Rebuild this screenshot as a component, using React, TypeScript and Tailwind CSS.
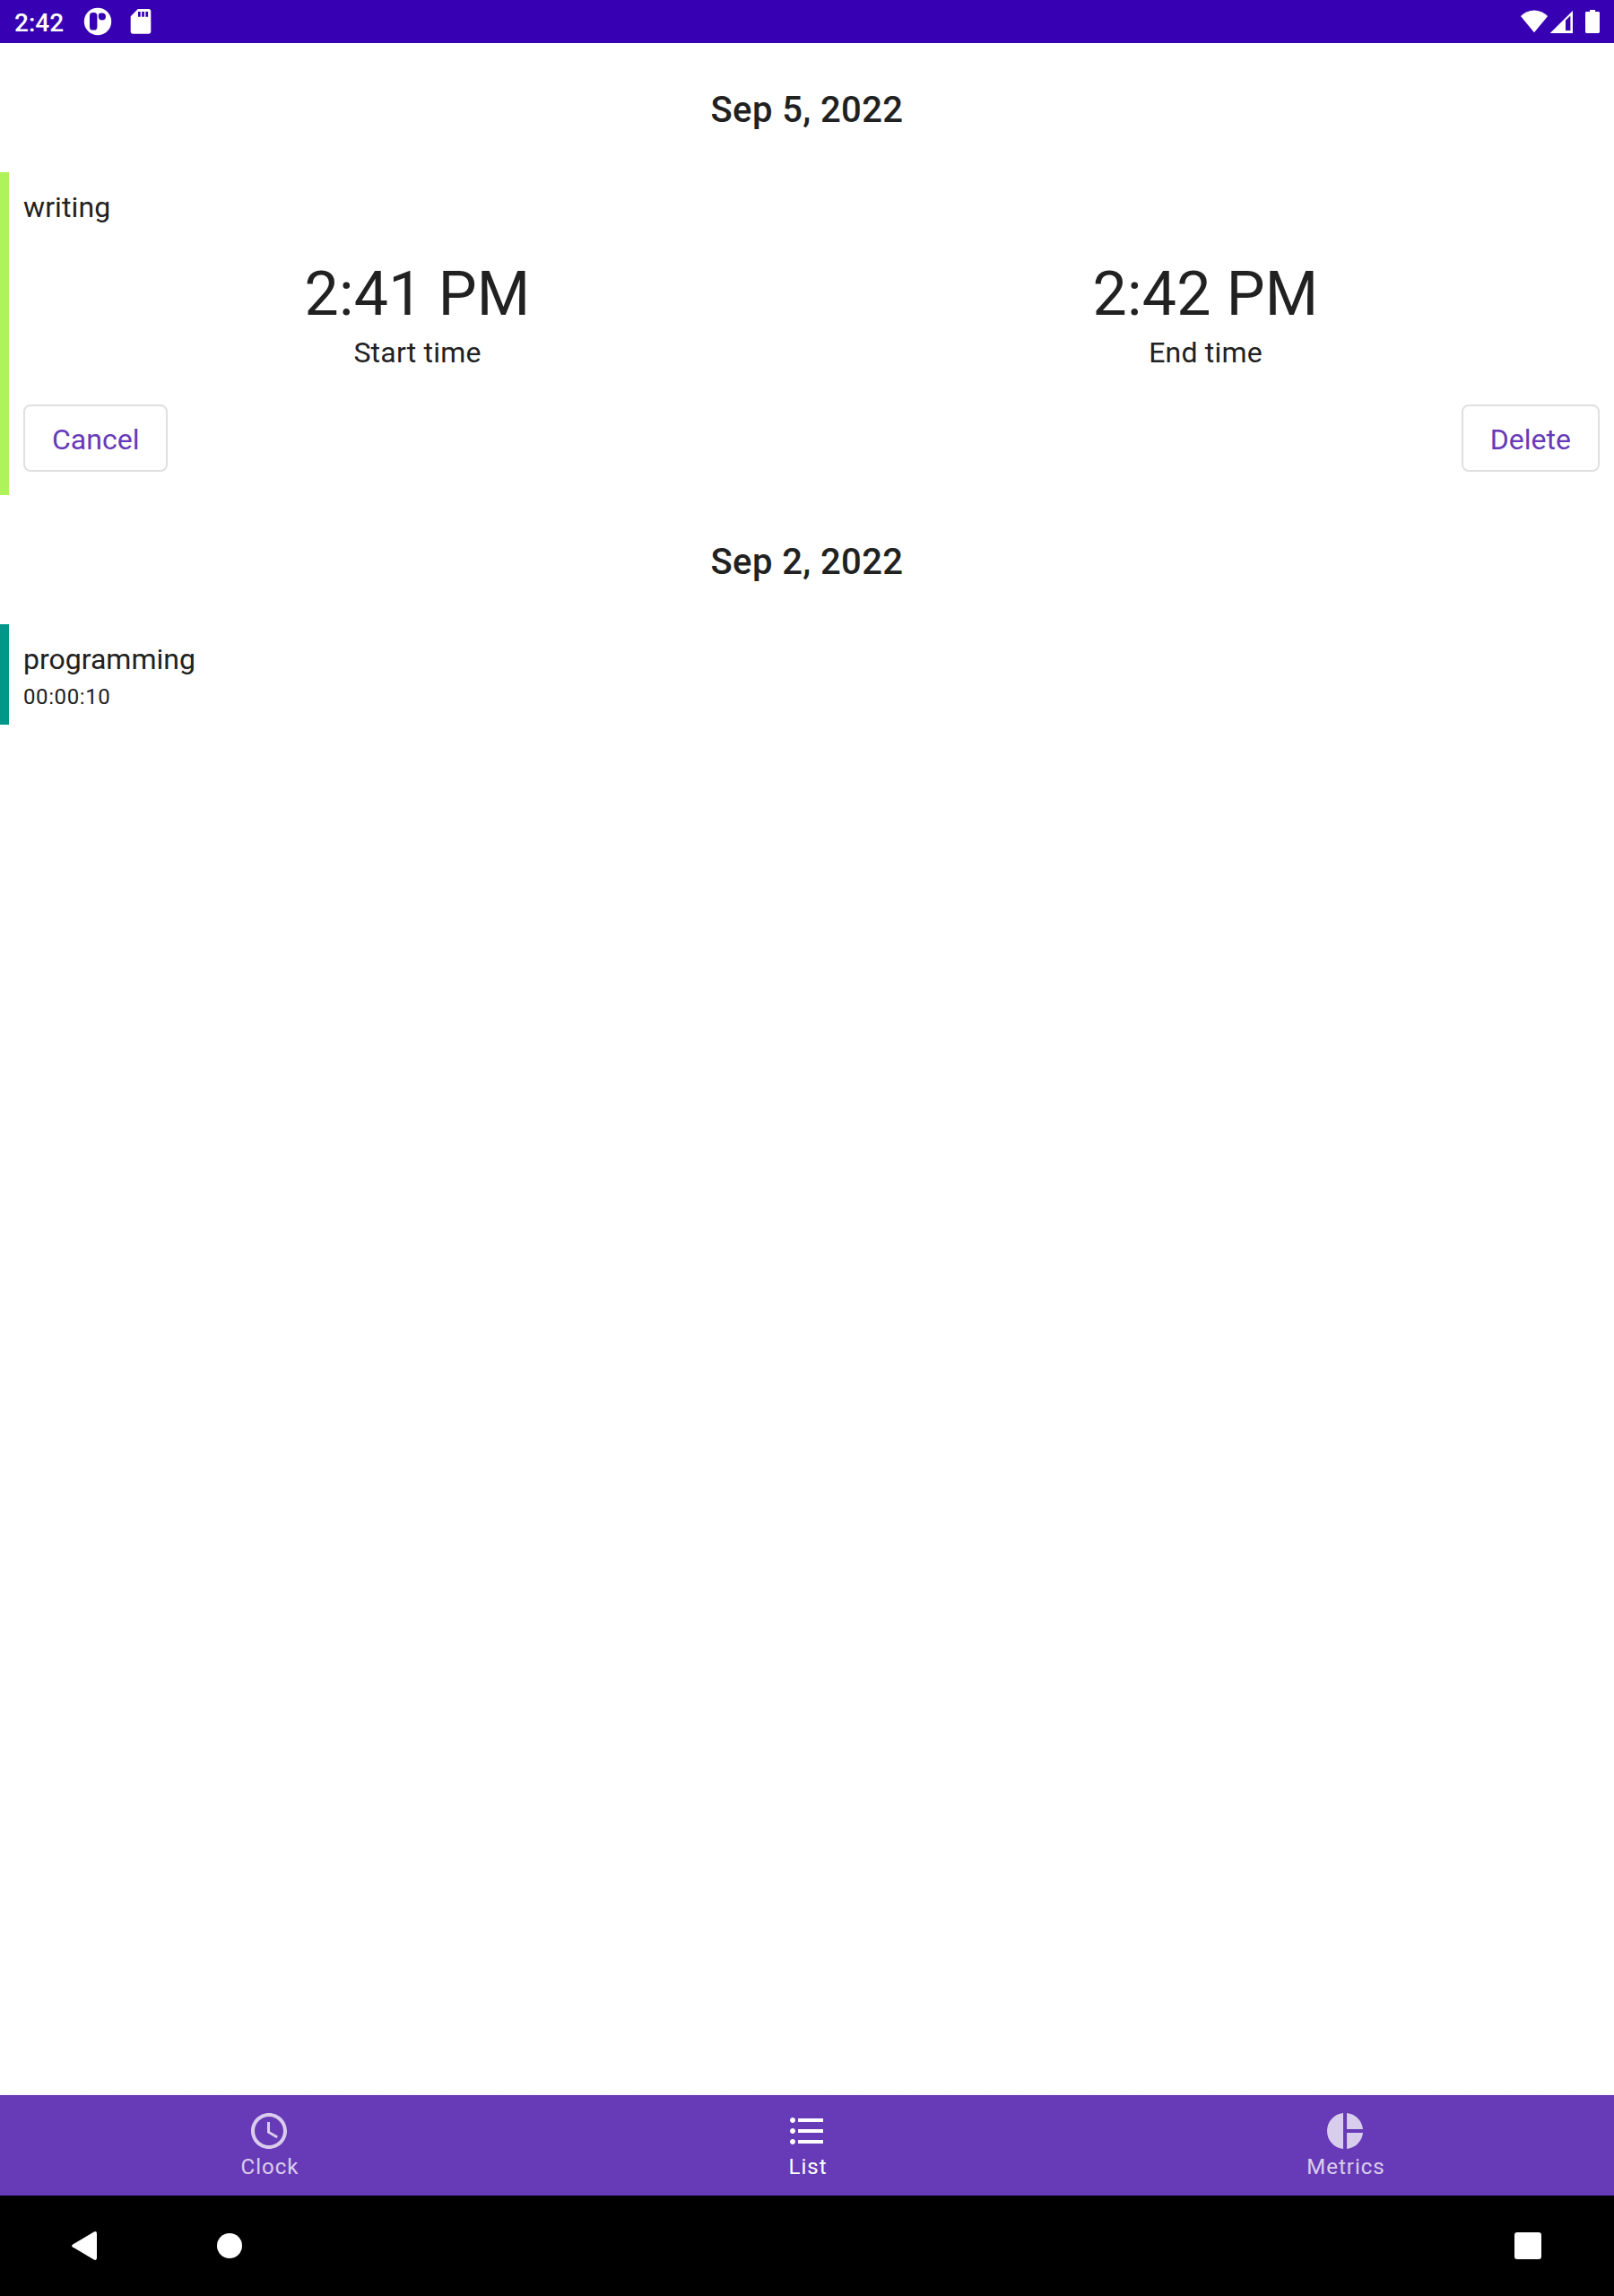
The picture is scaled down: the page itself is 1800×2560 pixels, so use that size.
import React from "react";

const font = "font-['Roboto',sans-serif]";

function DateHeader({ children }: { children: React.ReactNode }) {
  return (
    <h2 className="flex h-[144px] items-center justify-center pt-[6px] text-[40px] font-medium tracking-[0.4px]">
      {children}
    </h2>
  );
}

function Time({ value, label }: { value: string; label: string }) {
  return (
    <div className="flex flex-1 flex-col items-center">
      <div className="h-[80px] text-[68px] leading-[80px] tracking-[0.25px]">{value}</div>
      <div className="mt-[3px] h-[44px] text-[32px] leading-[44px] tracking-[0.2px]">{label}</div>
    </div>
  );
}

function OutlineButton({ children }: { children: string }) {
  return (
    <button className="h-[75px] rounded-[8px] border-2 border-[#e0e0e0] px-[30px] pt-[2px] text-[32px] text-[#673ab7]">
      {children}
    </button>
  );
}

function NavItem({ label, active, path }: { label: string; active?: boolean; path: string }) {
  return (
    <div className={`flex flex-1 flex-col items-center pt-[16px] text-white ${active ? "" : "opacity-75"}`}>
      <svg className="h-[48px] w-[48px]" viewBox="0 0 24 24" fill="currentColor">
        <path d={path} />
      </svg>
      <span className="mt-[1px] pl-[2px] text-[24px] leading-[30px] tracking-[1px]">{label}</span>
    </div>
  );
}

function NotificationIcons() {
  return (
    <svg className="ml-auto h-[48px] w-[80px]" viewBox="92 0 80 48">
      <circle cx="109" cy="24" r="15.2" fill="#fff" />
      <rect x="100" y="14" width="8.4" height="19.500" rx="3.600" fill="#3700b3" />
      <path d="M112 14.400H113.900a4.050 4.050 0 1 1-4.050 4.050V16.500Q110 14.600 112 14.400z" fill="#3700b3" />
      <path
        d="M153.800 10H165.500a2.800 2.800 0 0 1 2.800 2.800V35a2.800 2.800 0 0 1-2.800 2.800H148.500a2.800 2.800 0 0 1-2.800-2.800V18.200z"
        fill="#fff"
      />
      <path d="M154 13h2.700v5.700H154zM158.200 13h2.700v5.700h-2.700zM162.400 13h2.700v5.700h-2.700z" fill="#3700b3" />
    </svg>
  );
}

function SystemIcons() {
  return (
    <svg className="h-[48px] w-[92px]" viewBox="1694 0 92 48" fill="#fff">
      <path d="M1711 36.300L1695.900 18C1704.500 9.200 1717.500 9.200 1726.100 18z" />
      <path fillRule="evenodd" d="M1754 12v25h-25.300zM1751.400 17.500L1746 22.800V34h5.400z" />
      <path d="M1773 11h6v2h3.600a1.400 1.400 0 0 1 1.400 1.400V35.600a1.400 1.400 0 0 1-1.400 1.400h-13.200a1.400 1.400 0 0 1-1.400-1.400V14.400a1.400 1.400 0 0 1 1.400-1.400h3.600z" />
    </svg>
  );
}

export default function App() {
  return (
    <div className={`flex h-[2560px] w-[1800px] flex-col bg-white text-[#212121] ${font}`}>
      <header className="flex h-[48px] items-center justify-between bg-[#3700b3] pl-[16px] pr-[14px] text-white">
        <div className="flex w-[156px] items-center">
          <span className="pt-[3px] text-[28px] font-medium">2:42</span>
          <NotificationIcons />
        </div>
        <SystemIcons />
      </header>
      <main className="flex-1">
        <DateHeader>Sep 5, 2022</DateHeader>
        <section className="h-[360px] border-l-[10px] border-[#aef359] px-[16px] pt-[16px]">
          <div className="h-[46px] text-[32px] leading-[46px] tracking-[0.1px]">writing</div>
          <div className="mt-[34px] flex">
            <Time value="2:41 PM" label="Start time" />
            <Time value="2:42 PM" label="End time" />
          </div>
          <div className="mt-[36px] flex justify-between">
            <OutlineButton>Cancel</OutlineButton>
            <OutlineButton>Delete</OutlineButton>
          </div>
        </section>
        <DateHeader>Sep 2, 2022</DateHeader>
        <section className="h-[112px] border-l-[10px] border-[#009688] px-[16px] pt-[16px]">
          <div className="h-[46px] text-[32px] leading-[46px]">programming</div>
          <div className="pt-px text-[24px] leading-[36px] tracking-[0.6px]">00:00:10</div>
        </section>
      </main>
      <div className="h-[5px] bg-gradient-to-b from-white to-[#f8f8f8]" />
      <nav className="flex h-[112px] bg-[#673ab7]">
        <NavItem label="Clock" path="M11.99 2C6.47 2 2 6.48 2 12s4.47 10 9.99 10C17.52 22 22 17.52 22 12S17.52 2 11.99 2zM12 20c-4.42 0-8-3.58-8-8s3.58-8 8-8 8 3.58 8 8-3.58 8-8 8zm.5-13H11v6l5.25 3.15.75-1.23-4.5-2.67z" />
        <NavItem active label="List" path="M4 10.5c-.83 0-1.5.67-1.5 1.5s.67 1.5 1.5 1.5 1.5-.67 1.5-1.5-.67-1.5-1.5-1.5zm0-6c-.83 0-1.5.67-1.5 1.5S3.170 7.500 4 7.500 5.500 6.830 5.500 6 4.830 4.500 4 4.500zm0 12c-.83 0-1.500.68-1.500 1.500s.68 1.500 1.500 1.500 1.500-.68 1.500-1.500-.67-1.500-1.500-1.500zM7 19h14v-2H7v2zm0-6h14v-2H7v2zm0-8v2h14V5H7z" />
        <NavItem label="Metrics" path="M11 2v20c-5.070-.5-9-4.790-9-10s3.930-9.500 9-10zm2.030 0v8.990H22c-.47-4.740-4.240-8.520-8.970-8.990zm0 11.010V22c4.740-.47 8.500-4.250 8.970-8.990h-8.970z" />
      </nav>
      <footer className="flex h-[112px] items-center justify-between bg-black pl-[80px] pr-[81px]">
        <div className="flex items-center gap-[148px]">
          <svg className="h-[32px] w-[28px]" viewBox="0 0 28 32" fill="#fff">
            <path d="M.8 14.700 24.800.4Q28-.8 28 2.500V29.500Q28 32.800 24.800 31.600L.8 17.300Q-.6 16 .8 14.700z" />
          </svg>
          <div className="-ml-[14px] h-[28px] w-[28px] rounded-full bg-white" />
        </div>
        <div className="h-[30px] w-[30px] rounded-[3px] bg-white" />
      </footer>
    </div>
  );
}
